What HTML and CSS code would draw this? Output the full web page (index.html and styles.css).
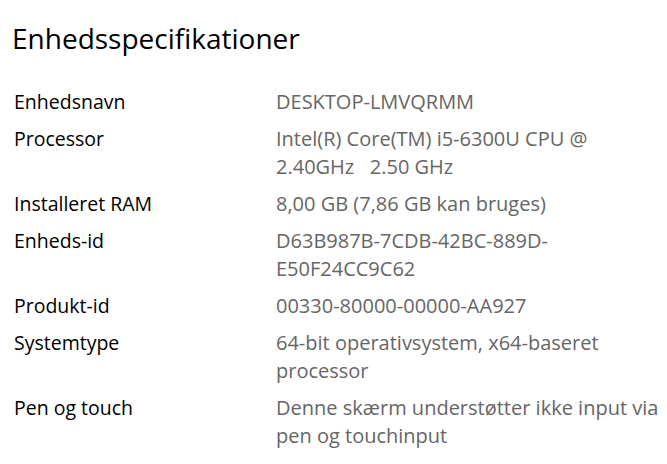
FILE: index.html
```html
<!DOCTYPE html>
<html lang="da">
<head>
    <meta charset="UTF-8">
    <meta name="viewport" content="width=device-width, initial-scale=1.0">
    <title>Enhedsspecifikationer</title>
    <link rel="stylesheet" href="styles.css">
</head>
<body>
    <div class="specs">
        <h1 class="specs-title">Enhedsspecifikationer</h1>

        <!-- Liste over enhedens specifikationer -->
        <div class="spec-list">
            <div class="spec-label">Enhedsnavn</div>
            <div class="spec-value">DESKTOP-LMVQRMM</div>

            <div class="spec-label">Processor</div>
            <div class="spec-value">Intel(R) Core(TM) i5-6300U CPU @ 2.40GHz&nbsp;&nbsp;&nbsp;2.50 GHz</div>

            <div class="spec-label">Installeret RAM</div>
            <div class="spec-value">8,00 GB (7,86 GB kan bruges)</div>

            <div class="spec-label">Enheds-id</div>
            <div class="spec-value">D63B987B-7CDB-42BC-889D-E50F24CC9C62</div>

            <div class="spec-label">Produkt-id</div>
            <div class="spec-value">00330-80000-00000-AA927</div>

            <div class="spec-label">Systemtype</div>
            <div class="spec-value">64-bit operativsystem, x64-baseret processor</div>

            <div class="spec-label">Pen og touch</div>
            <div class="spec-value">Denne skærm understøtter ikke input via pen og touchinput</div>
        </div>
    </div>
</body>
</html>
```

FILE: styles.css
```css
/* Side */
body {
    margin: 0;
    padding: 0;
    background-color: #ffffff;
    color: #000000;
    font-family: "Open Sans", "Noto Sans", sans-serif;
}

.specs {
    padding: 0 0 0 12px;
}

/* Overskrift */
.specs-title {
    margin: 0;
    padding-top: 20px;
    font-size: 28px;
    font-weight: 400;
    line-height: 36px;
}

/* To kolonner: navn og værdi */
.spec-list {
    display: grid;
    grid-template-columns: 264px 388px;
    row-gap: 9px;
    margin-top: 32px;
    line-height: 28px;
}

.spec-label {
    padding-left: 2px;
    font-size: 19.5px;
    color: #000000;
}

.spec-value {
    font-size: 20px;
    color: #666666;
}
```
